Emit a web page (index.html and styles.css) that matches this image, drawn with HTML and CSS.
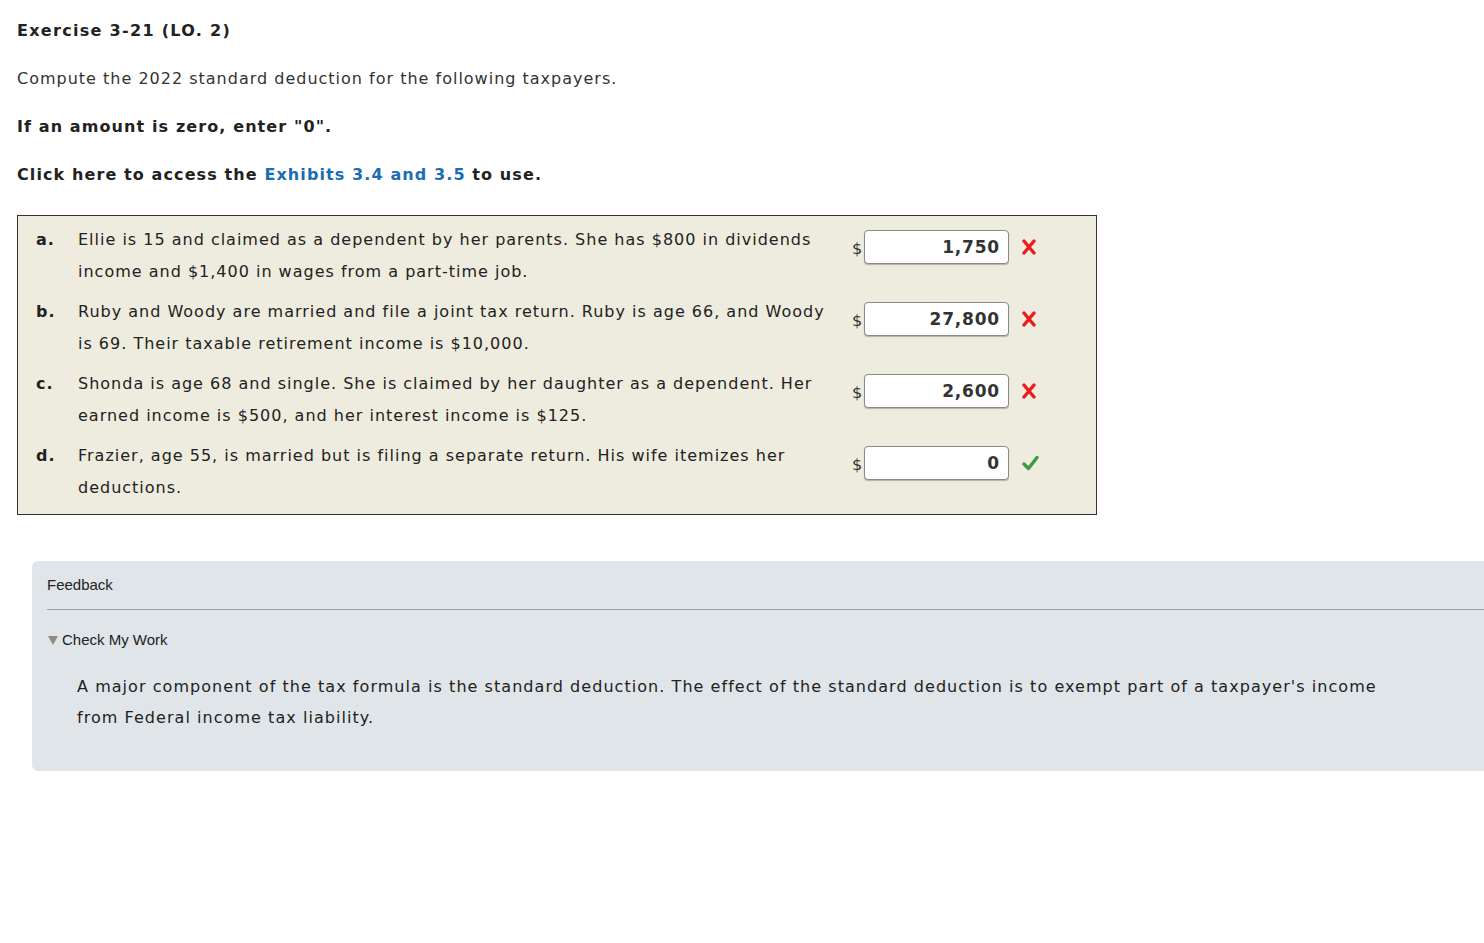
FILE: index.html
```html
<!DOCTYPE html>
<html>
<head>
<meta charset="utf-8">
<link rel="stylesheet" href="styles.css">
</head>
<body>
<div class="page">
  <h1 class="title">Exercise 3-21 (LO. 2)</h1>
  <p class="para">Compute the 2022 standard deduction for the following taxpayers.</p>
  <p class="para bold">If an amount is zero, enter "0".</p>
  <p class="para bold">Click here to access the <a class="link" href="#">Exhibits 3.4 and 3.5</a> to use.</p>

  <div class="qbox">
    <div class="item">
      <div class="lbl">a.</div>
      <div class="txt">Ellie is 15 and claimed as a dependent by her parents. She has $800 in dividends income and $1,400 in wages from a part-time job.</div>
      <div class="ans">
        <span class="dollar">$</span><span class="inp">1,750</span>
        <span class="mark"><svg width="14" height="16" viewBox="0 0 14 16"><path d="M2 2 L12 14 M12 2 L2 14" fill="none" stroke="#ee1c1c" stroke-width="3.4" stroke-linecap="round"/></svg></span>
      </div>
    </div>
    <div class="item">
      <div class="lbl">b.</div>
      <div class="txt">Ruby and Woody are married and file a joint tax return. Ruby is age 66, and Woody is 69. Their taxable retirement income is $10,000.</div>
      <div class="ans">
        <span class="dollar">$</span><span class="inp">27,800</span>
        <span class="mark"><svg width="14" height="16" viewBox="0 0 14 16"><path d="M2 2 L12 14 M12 2 L2 14" fill="none" stroke="#ee1c1c" stroke-width="3.4" stroke-linecap="round"/></svg></span>
      </div>
    </div>
    <div class="item">
      <div class="lbl">c.</div>
      <div class="txt">Shonda is age 68 and single. She is claimed by her daughter as a dependent. Her earned income is $500, and her interest income is $125.</div>
      <div class="ans">
        <span class="dollar">$</span><span class="inp">2,600</span>
        <span class="mark"><svg width="14" height="16" viewBox="0 0 14 16"><path d="M2 2 L12 14 M12 2 L2 14" fill="none" stroke="#ee1c1c" stroke-width="3.4" stroke-linecap="round"/></svg></span>
      </div>
    </div>
    <div class="item">
      <div class="lbl">d.</div>
      <div class="txt">Frazier, age 55, is married but is filing a separate return. His wife itemizes her deductions.</div>
      <div class="ans">
        <span class="dollar">$</span><span class="inp">0</span>
        <span class="mark"><svg width="17" height="16" viewBox="0 0 17 16"><path d="M2 9 L6.5 13.5 L15 2.5" fill="none" stroke="#3f9b3f" stroke-width="3.4" stroke-linecap="round" stroke-linejoin="round"/></svg></span>
      </div>
    </div>
  </div>

  <div class="feedback">
    <div class="fb-head">Feedback</div>
    <div class="fb-rule"></div>
    <div class="fb-toggle"><span class="tri"></span>Check My Work</div>
    <p class="fb-text">A major component of the tax formula is the standard deduction. The effect of the standard deduction is to exempt part of a taxpayer's income from Federal income tax liability.</p>
  </div>
</div>
</body>
</html>
```
FILE: styles.css
```css
html, body {
  margin: 0;
  padding: 0;
  overflow-x: hidden;
  background: #ffffff;
}
body {
  font-family: "DejaVu Sans", Verdana, sans-serif;
  font-size: 16px;
  letter-spacing: 1px;
  color: #222222;
}
.page {
  padding: 19px 0 0 17px;
}
.title {
  font-size: 16px;
  font-weight: bold;
  letter-spacing: 1.3px;
  margin: 0;
  line-height: 24px;
  color: #222;
}
.para {
  margin: 24px 0 0 0;
  line-height: 24px;
  color: #333;
}
.bold {
  font-weight: bold;
  letter-spacing: 1.1px;
  color: #222;
}
.link {
  color: #1a6db3;
  text-decoration: none;
}
.qbox {
  margin-top: 28px;
  width: 1078px;
  border: 1px solid #333;
  background: #eeecde;
  padding: 8px 0 10px 0;
}
.item {
  display: flex;
  align-items: flex-start;
  margin-bottom: 8px;
}
.item:last-child {
  margin-bottom: 0;
}
.lbl {
  width: 42px;
  padding-left: 18px;
  font-weight: bold;
  line-height: 32px;
  flex: none;
}
.txt {
  width: 762px;
  margin-right: 8px;
  line-height: 32px;
  flex: none;
  color: #222;
}
.ans {
  display: flex;
  align-items: center;
  margin-top: 6px;
  margin-left: 4px;
}
.dollar {
  font-size: 16px;
  letter-spacing: 0;
  color: #333;
  width: 12px;
  padding-top: 3px;
}
.inp {
  box-sizing: border-box;
  width: 145px;
  height: 34px;
  border: 1px solid #8a8a8a;
  border-radius: 4px;
  background: #fff;
  box-shadow: 0 1px 1px rgba(0,0,0,0.25);
  text-align: right;
  padding-right: 8px;
  font-weight: bold;
  font-size: 17px;
  letter-spacing: 0.8px;
  line-height: 32px;
  color: #333;
}
.mark {
  margin-left: 13px;
  display: flex;
  align-items: center;
}
.feedback {
  margin: 46px -40px 0 15px;
  background: #dfe5e8;
  border-radius: 6px 0 0 6px;
  padding: 14px 0 38px 15px;
  letter-spacing: 0;
}
.fb-head {
  font-family: "Liberation Sans", Arial, sans-serif;
  font-size: 15px;
  color: #222;
  line-height: 20px;
}
.fb-rule {
  height: 1px;
  background: #9a9ea0;
  margin-top: 14px;
}
.fb-toggle {
  font-family: "Liberation Sans", Arial, sans-serif;
  font-size: 15px;
  color: #222;
  margin-top: 20px;
  line-height: 20px;
  display: flex;
  align-items: center;
}
.tri {
  width: 0;
  height: 0;
  border-left: 5px solid transparent;
  border-right: 5px solid transparent;
  border-top: 9px solid #8c8c8c;
  margin: 0 4px 0 1px;
}
.fb-text {
  margin: 21px 0 0 30px;
  width: 1320px;
  line-height: 31px;
  letter-spacing: 1.05px;
  color: #222;
}
```
